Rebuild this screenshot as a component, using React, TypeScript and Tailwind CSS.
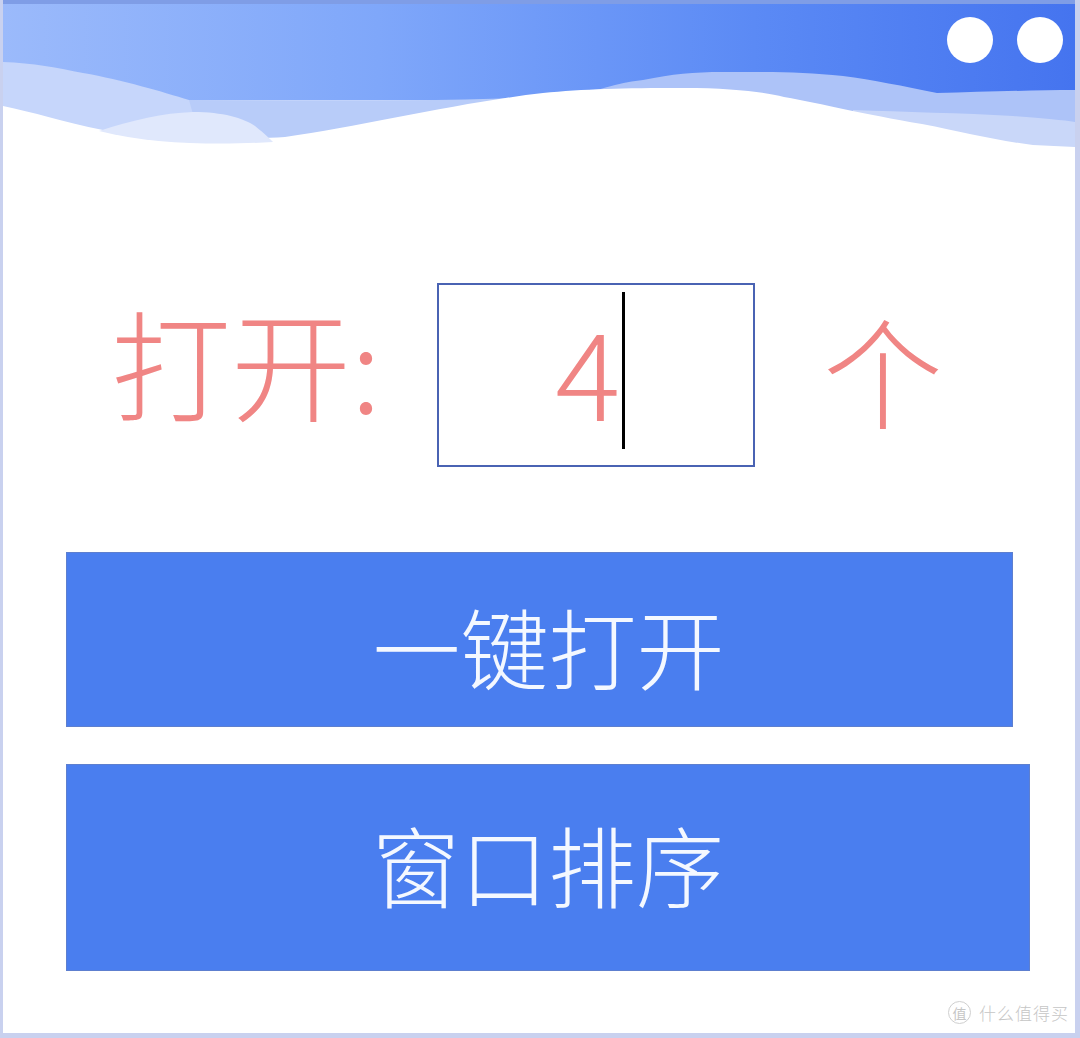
import React from 'react';

function Header() {
  // wave banner with the two window dots
  return (
    <svg
      viewBox="0 0 1072 150"
      preserveAspectRatio="none"
      className="block w-full h-[150px] shrink-0"
    >
      <defs>
        <linearGradient id="hdr" x1="0" y1="0" x2="1" y2="0">
          <stop offset="0" stopColor="#9bbafb" />
          <stop offset="0.35" stopColor="#7fa7fa" />
          <stop offset="0.7" stopColor="#5b8af5" />
          <stop offset="1" stopColor="#4574ef" />
        </linearGradient>
      </defs>
      <rect width="1072" height="150" fill="url(#hdr)" />
      <rect width="1072" height="4" fill="#7f9de6" />
      {/* right back hump */}
      <path
        d="M560,100 C600,88 620,82 640,80 C670,74 690,72 720,72 C770,72 800,72 840,76 C870,80 900,86 934,93 C980,92 1030,90 1072,90 V150 H560 Z"
        fill="#adc3f8"
      />
      <path
        d="M850,110 C900,112 960,113 1010,116 C1040,118 1060,120 1072,122 V150 H850 Z"
        fill="#c9d7f9"
      />
      {/* left pale band */}
      <path
        d="M0,62 C30,63 55,68 80,73 C120,80 160,92 186,100 L560,100 V150 H0 Z"
        fill="#c6d6fb"
      />
      {/* middle band */}
      <path
        d="M186,100 C300,101 420,102 540,97 L540,150 L200,150 Z"
        fill="#b8ccf9"
      />
      {/* white hill */}
      <path
        d="M0,106 C30,112 60,122 100,130 C160,140 230,140 282,137 C360,126 460,102 540,93 C580,89 620,88 680,88 C730,88 760,92 781,97 C820,104 860,114 919,124 C960,132 990,140 1030,145 L1072,147 V150 H0 Z"
        fill="#ffffff"
      />
      {/* front pale hump */}
      <path
        d="M96,131 C130,120 160,113 190,112 C220,112 240,118 252,126 C262,134 268,140 270,142 C220,145 150,145 96,131 Z"
        fill="#e0e8fc"
      />
      <circle cx="967" cy="40" r="23" fill="#ffffff" />
      <circle cx="1037" cy="40" r="23" fill="#ffffff" />
    </svg>
  );
}

export default function App() {
  return (
    <div className="relative w-[1080px] h-[1038px] overflow-hidden bg-white border-l-[3px] border-r-[5px] border-b-[5px] border-[#c9d1ef] flex flex-col font-['Noto_Sans_CJK_SC','Noto_Sans',sans-serif]">
      <Header />

      {/* open count row */}
      <div className="flex items-center mt-[133px] pl-[108px] h-[184px]">
        <span className="text-[120px] font-light leading-none text-[#f08584] -mt-[28px]">打开:</span>
        <div className="ml-[56px] w-[318px] h-[184px] border-2 border-[#4a63b3] flex items-center justify-center pr-[12px]">
          <span className="text-[122px] font-light leading-none text-[#f08584] -mt-[14px]">4</span>
          <span className="w-[3px] h-[157px] bg-black ml-[1px] -mt-[10px]" />
        </div>
        <span className="ml-[68px] text-[120px] font-light leading-none text-[#f08584] -mt-[12px]">个</span>
      </div>

      {/* actions */}
      <div className="flex flex-col pl-[63px] mt-[85px] gap-[37px]">
        <button className="w-[947px] h-[175px] bg-[#4a7eef] border border-[#5d7fcf] text-[#f4f8ff] text-[88px] font-light leading-none flex items-center justify-center pl-[18px] pt-[10px]">
          一键打开
        </button>
        <button className="w-[964px] h-[207px] bg-[#4a7eef] border border-[#5d7fcf] text-[#f4f8ff] text-[88px] font-light leading-none flex items-center justify-center pb-[10px]">
          窗口排序
        </button>
      </div>

      {/* watermark */}
      <div className="absolute right-[6px] bottom-[9px] flex items-center gap-[8px] text-[#c6c6c6]">
        <span className="w-[23px] h-[23px] rounded-full border border-[#cfcfcf] flex items-center justify-center text-[14px] leading-none">
          值
        </span>
        <span className="text-[17px] font-light leading-none tracking-[1px]">什么值得买</span>
      </div>
    </div>
  );
}
